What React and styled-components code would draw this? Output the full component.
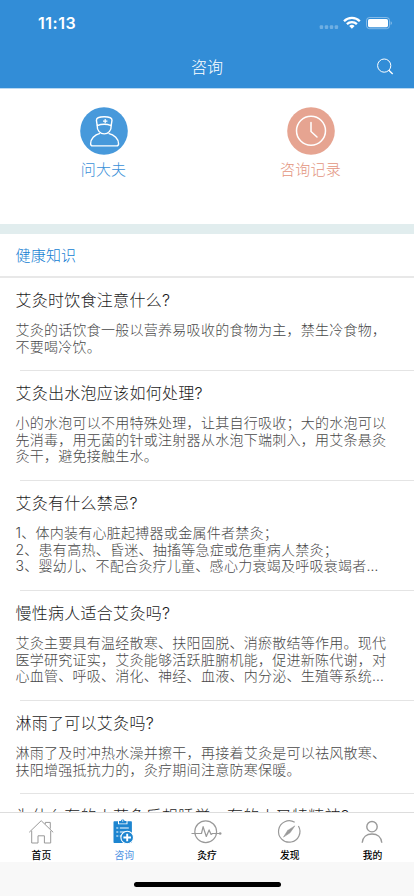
import styled, { createGlobalStyle } from 'styled-components';

const GlobalStyle = createGlobalStyle`
  * {
    box-sizing: border-box;
  }
  body {
    margin: 0;
    background: #fff;
    font-family: Inter, 'Noto Sans CJK SC', sans-serif;
  }
`;

const Screen = styled.div`
  display: flex;
  flex-direction: column;
  width: 414px;
  height: 896px;
  overflow: hidden;
  background: #fff;
`;

const Header = styled.header`
  flex: none;
  height: 89px;
  background: #328dd7;
  border-bottom: 1px solid #b9d9f2;
  color: #fff;
`;

const StatusBar = styled.div`
  display: flex;
  align-items: center;
  justify-content: space-between;
  height: 44px;
  padding: 2px 21px 0 38px;

  svg {
    margin-top: 1px;
  }
`;

const Time = styled.span`
  font-size: 16px;
  font-weight: 600;
  line-height: 20px;
  letter-spacing: 0.5px;
`;

const TitleBar = styled.div`
  display: grid;
  grid-template-columns: 44px 1fr 44px;
  align-items: center;
  height: 44px;
  padding: 1px 7px 0;
`;

const PageTitle = styled.h1`
  grid-column: 2;
  margin: 0;
  font-size: 16px;
  font-weight: 300;
  line-height: 24px;
  text-align: center;
`;

const SearchButton = styled.button`
  display: flex;
  justify-content: center;
  padding: 0;
  border: 0;
  background: none;
`;

const Shortcuts = styled.section`
  display: grid;
  grid-template-columns: 1fr 1fr;
  flex: none;
  height: 145px;
  padding-top: 18px;
  border-bottom: 10px solid #e1edee;
`;

const Shortcut = styled.div`
  display: flex;
  flex-direction: column;
  align-items: center;
  color: ${(props) => props.$color};
  font-size: 15px;
  font-weight: 300;
  line-height: 24px;
  letter-spacing: 0.2px;

  svg {
    margin-bottom: 3px;
  }
`;

const SectionTitle = styled.h2`
  flex: none;
  height: 44px;
  margin: 0;
  padding-left: 15.5px;
  border-bottom: 2px solid #e8e8e8;
  color: #127dd2;
  font-size: 15px;
  font-weight: 300;
  line-height: 44px;
  letter-spacing: 0.2px;
`;

const List = styled.main`
  flex: 1;
  min-height: 0;
  overflow: hidden;
`;

const Article = styled.article`
  height: ${(props) => props.$height}px;
  padding: 10px 0 0 15.5px;
  background: linear-gradient(#e4e4e4, #e4e4e4) 20px 100% / 100% 1px no-repeat;
`;

const ArticleTitle = styled.h3`
  margin: 0 0 10px;
  color: #1c1c1c;
  font-size: 16px;
  font-weight: 300;
  line-height: 24px;
  letter-spacing: 0.27px;
  white-space: nowrap;
`;

const ArticleText = styled.p`
  margin: 0;
  color: #484848;
  font-size: 14px;
  font-weight: 300;
  line-height: 16.6px;
  letter-spacing: 0.26px;
  white-space: pre;
`;

const TabBar = styled.nav`
  display: grid;
  grid-template-columns: repeat(5, 1fr);
  flex: none;
  height: 50px;
  border-top: 1px solid #ddd;
`;

const Tab = styled.div`
  display: flex;
  flex-direction: column;
  align-items: center;
  padding-top: 4px;
  color: ${(props) => (props.$active ? '#4a90e2' : '#000')};
  font-size: 9.8px;
  font-weight: ${(props) => (props.$active ? 400 : 500)};
  line-height: 16px;

  svg {
    margin: 0 1.5px 3px 0;
  }
`;

const HomeArea = styled.footer`
  display: flex;
  justify-content: center;
  flex: none;
  height: 34px;
  padding-top: 20px;
  background: #f8f8f8;
`;

const HomeIndicator = styled.div`
  width: 147px;
  height: 5px;
  border-radius: 3px;
  background: #000;
`;

const articles = [
  {
    title: '艾灸时饮食注意什么?',
    text: '艾灸的话饮食一般以营养易吸收的食物为主，禁生冷食物，\n不要喝冷饮。',
    height: 93,
  },
  {
    title: '艾灸出水泡应该如何处理?',
    text: '小的水泡可以不用特殊处理，让其自行吸收；大的水泡可以\n先消毒，用无菌的针或注射器从水泡下端刺入，用艾条悬灸\n灸干，避免接触生水。',
    height: 110,
  },
  {
    title: '艾灸有什么禁忌?',
    text: '1、体内装有心脏起搏器或金属件者禁灸；\n2、患有高热、昏迷、抽搐等急症或危重病人禁灸；\n3、婴幼儿、不配合灸疗儿童、感心力衰竭及呼吸衰竭者…',
    height: 110,
  },
  {
    title: '慢性病人适合艾灸吗?',
    text: '艾灸主要具有温经散寒、扶阳固脱、消瘀散结等作用。现代\n医学研究证实，艾灸能够活跃脏腑机能，促进新陈代谢，对\n心血管、呼吸、消化、神经、血液、内分泌、生殖等系统…',
    height: 110,
  },
  {
    title: '淋雨了可以艾灸吗?',
    text: '淋雨了及时冲热水澡并擦干，再接着艾灸是可以祛风散寒、\n扶阳增强抵抗力的，灸疗期间注意防寒保暖。',
    height: 93,
  },
  {
    title: '为什么有的人艾灸后想睡觉，有的人又特精神?',
    text: '',
    height: 93,
  },
];

function StatusIcons() {
  return (
    <svg width="74" height="16" viewBox="0 0 74 16">
      <g fill="#fff" fillOpacity="0.3">
        <rect x="0.7" y="9.3" width="3.4" height="3.8" rx="1" />
        <rect x="5.8" y="9.3" width="3.4" height="3.8" rx="1" />
        <rect x="10.8" y="9.3" width="3.4" height="3.8" rx="1" />
        <rect x="15.7" y="9.3" width="3.4" height="3.8" rx="1" />
      </g>
      <g fill="none" stroke="#fff" strokeWidth="2.3">
        <path d="M25 5.2a11.2 11.2 0 0 1 15.8 0" />
        <path d="M27.9 8.1a7.1 7.1 0 0 1 10 0" />
      </g>
      <path d="M30.2 10.1a3.9 3.9 0 0 1 5.4 0l-2.7 2.6z" fill="#fff" />
      <rect x="47.5" y="1.5" width="23" height="11.2" rx="3" fill="none" stroke="#fff" strokeOpacity="0.4" />
      <rect x="49" y="3" width="20" height="8.2" rx="1.6" fill="#fff" />
      <path d="M71.7 5.3v3.8c1.4-.6 1.4-3.2 0-3.8z" fill="#fff" fillOpacity="0.5" />
    </svg>
  );
}

function SearchIcon() {
  return (
    <svg width="18" height="18" viewBox="0 0 18 18" fill="none" stroke="#fff" strokeWidth="1">
      <circle cx="8.2" cy="7.6" r="6.6" />
      <path d="M12.8 12.2l3.9 3.7" strokeWidth="1.4" />
    </svg>
  );
}

function DoctorIcon() {
  return (
    <svg width="48" height="48" viewBox="0 0 48 48">
      <circle cx="24" cy="24" r="23.8" fill="#4799db" />
      <g fill="none" stroke="#fff" strokeWidth="1.4" strokeLinejoin="round">
        <path d="M17.2 18.6l-.8-5.4c0-2.9 3-3.4 7.8-3.4s7.8.5 7.8 3.4l-.8 5.4c-4-1.5-10-1.5-14 0z" />
        <path d="M17.2 18.6c-.3 5 3 8.3 7 8.3s7.3-3.3 7-8.3" />
        <path d="M20 26.4c-5.6 1.4-9.4 5.6-9.4 10.4 0 1.3.7 2.1 1.9 2.1h24.2c1.2 0 1.9-.8 1.9-2.1 0-4.8-4.3-9-10.1-10.4" />
        <path d="M25.2 11.9v4.4M23 14.1h4.4" strokeWidth="1.2" />
      </g>
    </svg>
  );
}

function ClockIcon() {
  return (
    <svg width="48" height="48" viewBox="0 0 48 48">
      <circle cx="24" cy="24" r="23.8" fill="#e6a491" />
      <g fill="none" stroke="#fff" strokeWidth="1.5" strokeLinecap="round">
        <circle cx="24" cy="23.7" r="14.5" />
        <path d="M24 15.5v9l6 5.5" />
      </g>
    </svg>
  );
}

function HomeIcon() {
  return (
    <svg width="28" height="28" viewBox="0 0 28 28" fill="none" stroke="#999" strokeWidth="1">
      <path d="M2.2 15.3L14.2 3.7l12 11.6" />
      <path d="M4.7 13.7V26H11v-7.2h6.4V26h6.3V13.7" />
      <path d="M18.3 7.1V5.4h5v6.3" />
    </svg>
  );
}

function ConsultIcon() {
  return (
    <svg width="28" height="28" viewBox="0 0 28 28">
      <path d="M5.500 4.200H9v3h9.500v-3h3.400c.6 0 1 .4 1 1V26H5.500c-.6 0-1-.4-1-1V5.200c0-.6.4-1 1-1z" fill="#1d85d0" />
      <path d="M10 3.900h1.900a1.900 1.900 0 0 1 3.700 0h1.900v2.500H10z" fill="#1d85d0" />
      <circle cx="13.7" cy="3.9" r=".7" fill="#fff" />
      <path d="M7.300 11h2M10.800 11h9M7.300 15h2M10.800 15h5M7.300 19h2M10.800 19h2" stroke="#fff" strokeWidth="1.2" />
      <circle cx="18.2" cy="20.5" r="6.3" fill="#1d85d0" stroke="#fff" strokeWidth="1.1" />
      <path d="M18.200 16.700v7.600M14.400 20.500h7.600" stroke="#fff" strokeWidth="1.9" />
    </svg>
  );
}

function MoxaIcon() {
  return (
    <svg width="32" height="28" viewBox="0 0 32 28" fill="none" stroke="#999" strokeWidth="1.2">
      <circle cx="15.7" cy="14.7" r="10.9" />
      <path d="M1.500 16.500h10l1.600-6.800 3.200 9.800 2.800-6.600 2 4.600 1.300-1h7" strokeLinejoin="round" />
      <circle cx="30.2" cy="16.5" r="1.3" fill="#999" stroke="none" />
    </svg>
  );
}

function CompassIcon() {
  return (
    <svg width="28" height="28" viewBox="0 0 28 28" fill="none" stroke="#999" strokeWidth="1.2">
      <path d="M19.700 5.300a10.700 10.700 0 1 0 3.700 3.700" />
      <path d="M19.800 8.900l-4.800 6.900-2.300-2.300z" fill="#999" strokeWidth=".6" />
      <path d="M12.700 13.500l2.300 2.300-6.500 4.300z" fill="#999" strokeWidth=".6" />
    </svg>
  );
}

function UserIcon() {
  return (
    <svg width="28" height="28" viewBox="0 0 28 28" fill="none" stroke="#999" strokeWidth="1.4">
      <circle cx="14" cy="9.7" r="5.2" />
      <path d="M4.200 25.800c.4-5.800 4.500-8.800 9.800-8.800s9.400 3 9.800 8.800" />
    </svg>
  );
}

const tabs = [
  { label: '首页', Icon: HomeIcon },
  { label: '咨询', Icon: ConsultIcon, active: true },
  { label: '灸疗', Icon: MoxaIcon },
  { label: '发现', Icon: CompassIcon },
  { label: '我的', Icon: UserIcon },
];

function App() {
  return (
    <Screen lang="zh-CN">
      <GlobalStyle />
      <Header>
        <StatusBar>
          <Time>11:13</Time>
          <StatusIcons />
        </StatusBar>
        <TitleBar>
          <PageTitle>咨询</PageTitle>
          <SearchButton aria-label="搜索">
            <SearchIcon />
          </SearchButton>
        </TitleBar>
      </Header>
      <Shortcuts>
        <Shortcut $color="#3a90d8">
          <DoctorIcon />
          问大夫
        </Shortcut>
        <Shortcut $color="#e39580">
          <ClockIcon />
          咨询记录
        </Shortcut>
      </Shortcuts>
      <SectionTitle>健康知识</SectionTitle>
      <List>
        {articles.map((article) => (
          <Article key={article.title} $height={article.height}>
            <ArticleTitle>{article.title}</ArticleTitle>
            <ArticleText>{article.text}</ArticleText>
          </Article>
        ))}
      </List>
      <TabBar>
        {tabs.map(({ label, Icon, active }) => (
          <Tab key={label} $active={active}>
            <Icon />
            {label}
          </Tab>
        ))}
      </TabBar>
      <HomeArea>
        <HomeIndicator />
      </HomeArea>
    </Screen>
  );
}

export default App;
